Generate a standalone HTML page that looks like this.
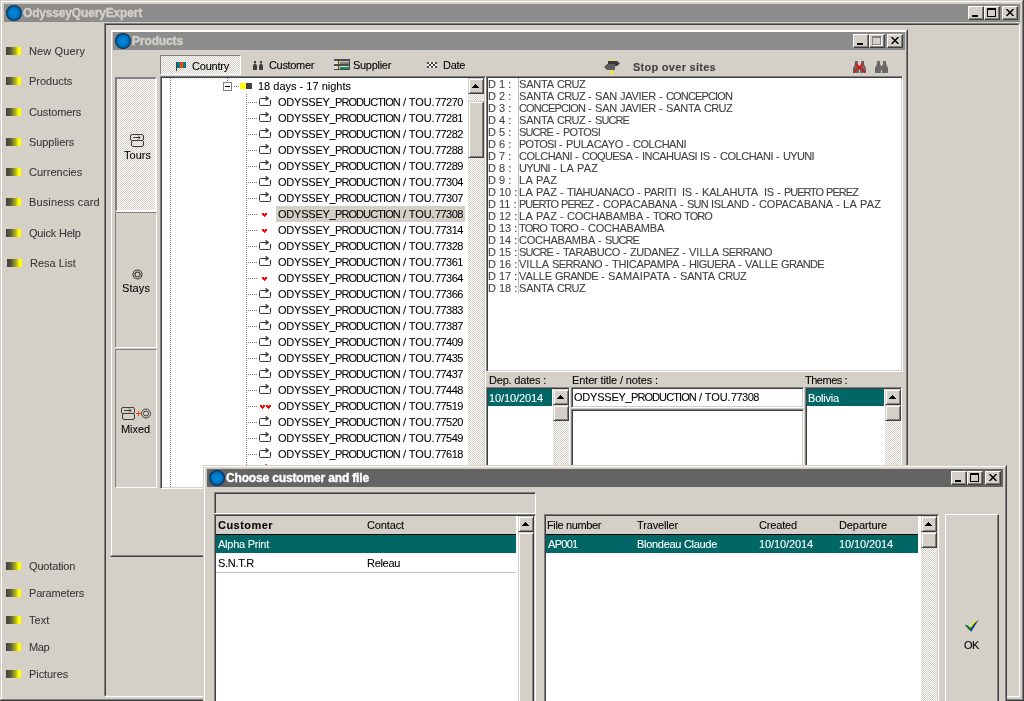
<!DOCTYPE html>
<html><head><meta charset="utf-8"><title>OdysseyQueryExpert</title>
<style>
*{margin:0;padding:0}
html,body{width:1024px;height:701px;overflow:hidden;background:#d4d0c8}
body{position:relative;font-family:"Liberation Sans",sans-serif;font-size:11px}
div,span.t,i,svg.a{position:absolute;display:block}
div{box-sizing:border-box}
.t{white-space:nowrap;will-change:transform;-webkit-text-stroke:0.08px}
.led{background:linear-gradient(90deg,#404040 0,#5a5a3c 30%,#b4b41e 65%,#ffff00 82%,#ffff00 100%)}
.orb{border-radius:50%;background:radial-gradient(circle closest-side at 50% 50%,#0088d8 0,#0080d0 40%,#0074c0 65%,#005c9c 80%,#003c70 90%,#002850 100%)}
.btn{background:#d4d0c8;border:1px solid;border-color:#fff #404040 #404040 #fff;box-shadow:inset -1px -1px 0 #808080}
.sbtn{background:#d4d0c8;border:1px solid;border-color:#d4d0c8 #404040 #404040 #d4d0c8;box-shadow:inset 1px 1px 0 #fff,inset -1px -1px 0 #808080}
.sunk1{border:1px solid;border-color:#808080 #fff #fff #808080}
.rais1{border:1px solid;border-color:#fff #808080 #808080 #fff}
.sunk2{border:1px solid;border-color:#808080 #fff #fff #808080;box-shadow:inset 1px 1px 0 #404040,inset -1px -1px 0 #d4d0c8}
.dith{background-image:conic-gradient(#fff 25%,#d4d0c8 0 50%,#fff 0 75%,#d4d0c8 0);background-size:2px 2px}
.vdot{background-image:linear-gradient(#808080 50%,transparent 0);background-size:1px 2px}
.hdot{background-image:linear-gradient(90deg,#808080 50%,transparent 0);background-size:2px 1px}
</style></head>
<body>
<div style="left:0px;top:0px;width:1024px;height:701px;background:#d4d0c8;"></div>
<div style="left:1px;top:1px;width:1022px;height:700px;border-left:1px solid #fff;border-top:1px solid #fff;box-sizing:border-box;"></div>
<div style="left:1022px;top:1px;width:1px;height:700px;background:#808080;"></div>
<div style="left:1023px;top:0px;width:1px;height:701px;background:#404040;"></div>
<div style="left:4px;top:4px;width:1016px;height:18px;background:#8c8c8c;"></div>
<div class="orb" style="left:6px;top:5px;width:16px;height:16px;"></div>
<span class="t" style="left:23px;top:7px;font-size:12px;line-height:13px;font-weight:bold;color:#d4d0c8;letter-spacing:-0.170px;-webkit-text-stroke:0.35px #d4d0c8;">OdysseyQueryExpert</span>
<div class="btn" style="left:968px;top:6px;width:16px;height:14px;"><i style="left:3px;top:8px;width:6px;height:2px;background:#000"></i></div>
<div class="btn" style="left:984px;top:6px;width:16px;height:14px;"><i style="left:2px;top:1px;width:9px;height:9px;border:1px solid #000;border-top:2px solid #000;box-sizing:border-box"></i></div>
<div class="btn" style="left:1002px;top:6px;width:16px;height:14px;"><svg style="position:absolute;left:3px;top:2px" width="8" height="7" viewBox="0 0 8 7"><path d="M0.5 0L7.5 7M7.5 0L0.5 7" stroke="#000" stroke-width="1.45" fill="none"/></svg></div>
<div style="left:104px;top:23px;width:916px;height:674px;border:1px solid;border-color:#808080 #fff #fff #808080;box-sizing:border-box;"></div>
<div style="left:105px;top:24px;width:914px;height:672px;border:1px solid;border-color:#404040 #d4d0c8 #d4d0c8 #404040;box-sizing:border-box;"></div>
<div style="left:1px;top:699px;width:1022px;height:1px;background:#808080;"></div>
<div style="left:0px;top:700px;width:1024px;height:1px;background:#404040;"></div>
<div class="led" style="left:6px;top:47px;width:15px;height:8px;"></div>
<span class="t" style="left:29px;top:45px;font-size:11px;line-height:12px;color:#383838;letter-spacing:0.132px;">New Query</span>
<div class="led" style="left:6px;top:77px;width:15px;height:8px;"></div>
<span class="t" style="left:29px;top:75px;font-size:11px;line-height:12px;color:#383838;letter-spacing:-0.026px;">Products</span>
<div class="led" style="left:6px;top:108px;width:15px;height:8px;"></div>
<span class="t" style="left:29px;top:106px;font-size:11px;line-height:12px;color:#383838;letter-spacing:-0.109px;">Customers</span>
<div class="led" style="left:6px;top:138px;width:15px;height:8px;"></div>
<span class="t" style="left:29px;top:136px;font-size:11px;line-height:12px;color:#383838;letter-spacing:-0.073px;">Suppliers</span>
<div class="led" style="left:6px;top:168px;width:15px;height:8px;"></div>
<span class="t" style="left:29px;top:166px;font-size:11px;line-height:12px;color:#383838;letter-spacing:0.002px;">Currencies</span>
<div class="led" style="left:6px;top:198px;width:15px;height:8px;"></div>
<span class="t" style="left:29px;top:196px;font-size:11px;line-height:12px;color:#383838;letter-spacing:0.124px;">Business card</span>
<div class="led" style="left:6px;top:229px;width:15px;height:8px;"></div>
<span class="t" style="left:29px;top:227px;font-size:11px;line-height:12px;color:#383838;letter-spacing:-0.210px;">Quick Help</span>
<div class="led" style="left:7px;top:259px;width:15px;height:8px;"></div>
<span class="t" style="left:30px;top:257px;font-size:11px;line-height:12px;color:#383838;letter-spacing:-0.017px;">Resa List</span>
<div class="led" style="left:6px;top:562px;width:15px;height:8px;"></div>
<span class="t" style="left:29px;top:560px;font-size:11px;line-height:12px;color:#383838;letter-spacing:-0.166px;">Quotation</span>
<div class="led" style="left:6px;top:589px;width:15px;height:8px;"></div>
<span class="t" style="left:29px;top:587px;font-size:11px;line-height:12px;color:#383838;letter-spacing:-0.165px;">Parameters</span>
<div class="led" style="left:6px;top:616px;width:15px;height:8px;"></div>
<span class="t" style="left:29px;top:614px;font-size:11px;line-height:12px;color:#383838;letter-spacing:0.007px;">Text</span>
<div class="led" style="left:6px;top:643px;width:15px;height:8px;"></div>
<span class="t" style="left:29px;top:641px;font-size:11px;line-height:12px;color:#383838;letter-spacing:-0.399px;">Map</span>
<div class="led" style="left:6px;top:670px;width:15px;height:8px;"></div>
<span class="t" style="left:29px;top:668px;font-size:11px;line-height:12px;color:#383838;letter-spacing:-0.067px;">Pictures</span>
<div style="left:110px;top:29px;width:798px;height:528px;background:#d4d0c8;border:1px solid;border-color:#d4d0c8 #404040 #404040 #d4d0c8;box-sizing:border-box;"></div>
<div style="left:111px;top:30px;width:796px;height:526px;border:1px solid;border-color:#fff #808080 #808080 #fff;box-sizing:border-box;"></div>
<div style="left:113px;top:32px;width:792px;height:18px;background:#8c8c8c;"></div>
<div style="left:112px;top:31px;width:794px;height:1px;background:#fff;"></div>
<div class="orb" style="left:115px;top:33px;width:16px;height:16px;"></div>
<span class="t" style="left:132px;top:35px;font-size:12px;line-height:13px;font-weight:bold;color:#d4d0c8;letter-spacing:-0.126px;-webkit-text-stroke:0.35px #d4d0c8;">Products</span>
<div class="btn" style="left:853px;top:34px;width:16px;height:14px;"><i style="left:3px;top:8px;width:6px;height:2px;background:#000"></i></div>
<div class="btn" style="left:869px;top:34px;width:16px;height:14px;"><i style="left:2px;top:1px;width:9px;height:9px;border:1px solid #808080;border-top:2px solid #808080;box-shadow:1px 1px 0 #fff;box-sizing:border-box"></i></div>
<div class="btn" style="left:887px;top:34px;width:16px;height:14px;"><svg style="position:absolute;left:3px;top:2px" width="8" height="7" viewBox="0 0 8 7"><path d="M0.5 0L7.5 7M7.5 0L0.5 7" stroke="#000" stroke-width="1.45" fill="none"/></svg></div>
<div class="sunk1 dith" style="left:160px;top:55px;width:81px;height:20px;"></div>
<div style="left:176px;top:62px;width:1px;height:9px;background:#404040;"></div>
<div style="left:177px;top:62px;width:3px;height:6px;background:#008080;"></div>
<div style="left:180px;top:62px;width:3px;height:6px;background:#ff4500;"></div>
<div style="left:183px;top:62px;width:3px;height:6px;background:#008080;"></div>
<span class="t" style="left:192px;top:60px;font-size:11px;line-height:12px;letter-spacing:-0.216px;">Country</span>
<svg class="a" style="left:253px;top:61px" width="10" height="9" viewBox="0 0 10 9"><g fill="#404040"><rect x="1" y="0" width="2" height="2.4"/><path d="M1 3H3L4 4.5V9H0V4.5Z"/><rect x="7" y="0" width="2" height="2.4"/><path d="M7 3H9L10 4.5V9H6V4.5Z"/></g></svg>
<span class="t" style="left:269px;top:59px;font-size:11px;line-height:12px;letter-spacing:-0.335px;">Customer</span>
<svg class="a" style="left:334px;top:59px" width="16" height="11" viewBox="0 0 16 11" shape-rendering="crispEdges"><rect width="16" height="11" fill="#4c4c4c"/><rect x="0" y="2" width="4" height="3" fill="#dcdce4"/><rect x="5" y="2" width="1" height="3" fill="#e8e000"/><rect x="6" y="2" width="9" height="1" fill="#c8c8c8"/><rect x="6" y="3" width="9" height="2" fill="#808080"/><rect x="0" y="7" width="4" height="3" fill="#dcdce4"/><rect x="5" y="7" width="1" height="3" fill="#e8e000"/><rect x="6" y="7" width="9" height="1" fill="#c8e0d0"/><rect x="6" y="8" width="9" height="2" fill="#109060"/></svg>
<span class="t" style="left:353px;top:59px;font-size:11px;line-height:12px;letter-spacing:-0.295px;">Supplier</span>
<svg class="a" style="left:427px;top:62px" width="10" height="6" viewBox="0 0 10 6"><rect width="10" height="6" fill="#f4f4f4"/><g fill="#484848"><rect x="0" y="0" width="2" height="2"/><rect x="4" y="0" width="2" height="2"/><rect x="8" y="0" width="2" height="2"/><rect x="2" y="2" width="2" height="2"/><rect x="6" y="2" width="2" height="2"/><rect x="0" y="4" width="2" height="2"/><rect x="4" y="4" width="2" height="2"/><rect x="8" y="4" width="2" height="2"/></g></svg>
<span class="t" style="left:443px;top:59px;font-size:11px;line-height:12px;letter-spacing:-0.309px;">Date</span>
<svg class="a" style="left:604px;top:59px" width="17" height="16" viewBox="0 0 17 16"><rect x="7" y="0" width="2" height="16" fill="#ffee00"/><path d="M4 2H13L16 4.5L13 7H4Z" fill="#383838"/><path d="M11 5H3L0 8L3 11H11Z" fill="#5c5c5c"/></svg>
<span class="t" style="left:633px;top:61px;font-size:11px;line-height:12px;font-weight:bold;color:#404040;letter-spacing:0.276px;">Stop over sites</span>
<svg class="a" style="left:853px;top:61px" width="13" height="12" viewBox="0 0 13 12"><g fill="#686868"><rect x="2" y="0" width="3" height="4"/><path d="M2 3H5L6 5V12H0V7Z"/><rect x="8" y="0" width="3" height="4"/><path d="M8 3H11L13 7V12H7V5Z"/><rect x="5" y="5" width="3" height="4"/></g><path d="M2 2.5L12.5 11.5M10.5 2.5L0 11.5" stroke="#ff0000" stroke-width="1.3"/></svg>
<svg class="a" style="left:875px;top:61px" width="13" height="12" viewBox="0 0 13 12"><g fill="#686868"><rect x="2" y="0" width="3" height="4"/><path d="M2 3H5L6 5V12H0V7Z"/><rect x="8" y="0" width="3" height="4"/><path d="M8 3H11L13 7V12H7V5Z"/><rect x="5" y="5" width="3" height="4"/></g></svg>
<div class="sunk1 dith" style="left:115px;top:77px;width:42px;height:135px;border-width:2px;"></div>
<div class="sunk1" style="left:115px;top:212px;width:42px;height:136px;"></div>
<div class="sunk1" style="left:115px;top:349px;width:42px;height:139px;"></div>
<svg class="a" style="left:130px;top:134px" width="15" height="14" viewBox="0 0 15 14"><g fill="none" stroke="#404040" stroke-width="1"><rect x="0.5" y="0.5" width="13" height="6" rx="1.5"/><rect x="1.5" y="6.5" width="12" height="6" rx="1.5"/><path d="M3 3.5H10M8 1.5L10 3.5L8 5.5" /></g></svg>
<span class="t" style="left:124px;top:149px;font-size:11px;line-height:12px;color:#000;letter-spacing:0.021px;">Tours</span>
<svg class="a" style="left:132px;top:269px" width="11" height="11" viewBox="0 0 11 11"><circle cx="5.5" cy="5.5" r="4.5" fill="none" stroke="#383838" stroke-width="1.1"/><circle cx="5.5" cy="5.5" r="2.5" fill="none" stroke="#383838" stroke-width="1.1"/></svg>
<span class="t" style="left:122px;top:282px;font-size:11px;line-height:12px;color:#000;letter-spacing:0.098px;">Stays</span>
<svg class="a" style="left:121px;top:407px" width="15" height="14" viewBox="0 0 15 14"><g fill="none" stroke="#404040" stroke-width="1"><rect x="0.5" y="0.5" width="13" height="6" rx="1.5"/><rect x="1.5" y="6.5" width="12" height="6" rx="1.5"/><path d="M3 3.5H10M8 1.5L10 3.5L8 5.5" /></g></svg>
<svg class="a" style="left:136px;top:408px" width="16" height="11" viewBox="0 0 16 11"><path d="M0 5.5H5M2.5 3V8" stroke="#ff4500" stroke-width="1"/><circle cx="10" cy="5.5" r="4.5" fill="none" stroke="#404040"/><circle cx="10" cy="5.5" r="2.5" fill="none" stroke="#404040"/></svg>
<span class="t" style="left:121px;top:423px;font-size:11px;line-height:12px;color:#000;letter-spacing:-0.068px;">Mixed</span>
<div class="sunk2" style="left:160px;top:76px;width:326px;height:413px;background:#fff;"></div>
<div class="vdot" style="left:170px;top:78px;width:1px;height:410px;"></div>
<div class="vdot" style="left:227px;top:78px;width:1px;height:4px;"></div>
<div class="vdot" style="left:246px;top:94px;width:1px;height:394px;"></div>
<div style="left:223px;top:82px;width:9px;height:9px;border:1px solid #808080;background:#fff;box-sizing:border-box;"><i style="left:1px;top:3px;width:5px;height:1px;background:#000"></i></div>
<div class="hdot" style="left:234px;top:86px;width:5px;height:1px;"></div>
<div style="left:240px;top:83px;width:6px;height:6px;background:#ffff00;"></div>
<div style="left:246px;top:83px;width:6px;height:6px;background:#404040;"></div>
<span class="t" style="left:258px;top:80px;font-size:11px;line-height:12px;color:#000;letter-spacing:0.003px;">18 days - 17 nights</span>
<div class="hdot" style="left:248px;top:102px;width:10px;height:1px;"></div>
<svg class="a" style="left:259px;top:96px" width="12" height="10" viewBox="0 0 12 10"><g fill="none" stroke="#383838"><path d="M8.5 2.5H1.5Q0.5 2.5 0.5 3.5V8.5Q0.5 9.5 1.5 9.5H10.5Q11.5 9.5 11.5 8.5V4"/><path d="M6.5 0.4L9.2 2.5L6.5 4.6" stroke-width="1.3"/></g></svg>
<span class="t" style="left:278px;top:96px;font-size:11px;line-height:12px;color:#000;letter-spacing:-0.226px;">ODYSSEY_</span>
<span class="t" style="left:335px;top:96px;font-size:11px;line-height:12px;color:#000;letter-spacing:-0.914px;">PRODUCTION</span>
<span class="t" style="left:402.6px;top:96px;font-size:11px;line-height:12px;color:#000;letter-spacing:-0.065px;">/ TOU.</span>
<span class="t" style="left:434.5px;top:96px;font-size:11px;line-height:12px;color:#000;letter-spacing:-0.557px;">77270</span>
<div class="hdot" style="left:248px;top:118px;width:10px;height:1px;"></div>
<svg class="a" style="left:259px;top:112px" width="12" height="10" viewBox="0 0 12 10"><g fill="none" stroke="#383838"><path d="M8.5 2.5H1.5Q0.5 2.5 0.5 3.5V8.5Q0.5 9.5 1.5 9.5H10.5Q11.5 9.5 11.5 8.5V4"/><path d="M6.5 0.4L9.2 2.5L6.5 4.6" stroke-width="1.3"/></g></svg>
<span class="t" style="left:278px;top:112px;font-size:11px;line-height:12px;color:#000;letter-spacing:-0.226px;">ODYSSEY_</span>
<span class="t" style="left:335px;top:112px;font-size:11px;line-height:12px;color:#000;letter-spacing:-0.914px;">PRODUCTION</span>
<span class="t" style="left:402.6px;top:112px;font-size:11px;line-height:12px;color:#000;letter-spacing:-0.065px;">/ TOU.</span>
<span class="t" style="left:434.5px;top:112px;font-size:11px;line-height:12px;color:#000;letter-spacing:-0.557px;">77281</span>
<div class="hdot" style="left:248px;top:134px;width:10px;height:1px;"></div>
<svg class="a" style="left:259px;top:128px" width="12" height="10" viewBox="0 0 12 10"><g fill="none" stroke="#383838"><path d="M8.5 2.5H1.5Q0.5 2.5 0.5 3.5V8.5Q0.5 9.5 1.5 9.5H10.5Q11.5 9.5 11.5 8.5V4"/><path d="M6.5 0.4L9.2 2.5L6.5 4.6" stroke-width="1.3"/></g></svg>
<span class="t" style="left:278px;top:128px;font-size:11px;line-height:12px;color:#000;letter-spacing:-0.226px;">ODYSSEY_</span>
<span class="t" style="left:335px;top:128px;font-size:11px;line-height:12px;color:#000;letter-spacing:-0.914px;">PRODUCTION</span>
<span class="t" style="left:402.6px;top:128px;font-size:11px;line-height:12px;color:#000;letter-spacing:-0.065px;">/ TOU.</span>
<span class="t" style="left:434.5px;top:128px;font-size:11px;line-height:12px;color:#000;letter-spacing:-0.557px;">77282</span>
<div class="hdot" style="left:248px;top:150px;width:10px;height:1px;"></div>
<svg class="a" style="left:259px;top:144px" width="12" height="10" viewBox="0 0 12 10"><g fill="none" stroke="#383838"><path d="M8.5 2.5H1.5Q0.5 2.5 0.5 3.5V8.5Q0.5 9.5 1.5 9.5H10.5Q11.5 9.5 11.5 8.5V4"/><path d="M6.5 0.4L9.2 2.5L6.5 4.6" stroke-width="1.3"/></g></svg>
<span class="t" style="left:278px;top:144px;font-size:11px;line-height:12px;color:#000;letter-spacing:-0.226px;">ODYSSEY_</span>
<span class="t" style="left:335px;top:144px;font-size:11px;line-height:12px;color:#000;letter-spacing:-0.914px;">PRODUCTION</span>
<span class="t" style="left:402.6px;top:144px;font-size:11px;line-height:12px;color:#000;letter-spacing:-0.065px;">/ TOU.</span>
<span class="t" style="left:434.5px;top:144px;font-size:11px;line-height:12px;color:#000;letter-spacing:-0.557px;">77288</span>
<div class="hdot" style="left:248px;top:166px;width:10px;height:1px;"></div>
<svg class="a" style="left:259px;top:160px" width="12" height="10" viewBox="0 0 12 10"><g fill="none" stroke="#383838"><path d="M8.5 2.5H1.5Q0.5 2.5 0.5 3.5V8.5Q0.5 9.5 1.5 9.5H10.5Q11.5 9.5 11.5 8.5V4"/><path d="M6.5 0.4L9.2 2.5L6.5 4.6" stroke-width="1.3"/></g></svg>
<span class="t" style="left:278px;top:160px;font-size:11px;line-height:12px;color:#000;letter-spacing:-0.226px;">ODYSSEY_</span>
<span class="t" style="left:335px;top:160px;font-size:11px;line-height:12px;color:#000;letter-spacing:-0.914px;">PRODUCTION</span>
<span class="t" style="left:402.6px;top:160px;font-size:11px;line-height:12px;color:#000;letter-spacing:-0.065px;">/ TOU.</span>
<span class="t" style="left:434.5px;top:160px;font-size:11px;line-height:12px;color:#000;letter-spacing:-0.557px;">77289</span>
<div class="hdot" style="left:248px;top:182px;width:10px;height:1px;"></div>
<svg class="a" style="left:259px;top:176px" width="12" height="10" viewBox="0 0 12 10"><g fill="none" stroke="#383838"><path d="M8.5 2.5H1.5Q0.5 2.5 0.5 3.5V8.5Q0.5 9.5 1.5 9.5H10.5Q11.5 9.5 11.5 8.5V4"/><path d="M6.5 0.4L9.2 2.5L6.5 4.6" stroke-width="1.3"/></g></svg>
<span class="t" style="left:278px;top:176px;font-size:11px;line-height:12px;color:#000;letter-spacing:-0.226px;">ODYSSEY_</span>
<span class="t" style="left:335px;top:176px;font-size:11px;line-height:12px;color:#000;letter-spacing:-0.914px;">PRODUCTION</span>
<span class="t" style="left:402.6px;top:176px;font-size:11px;line-height:12px;color:#000;letter-spacing:-0.065px;">/ TOU.</span>
<span class="t" style="left:434.5px;top:176px;font-size:11px;line-height:12px;color:#000;letter-spacing:-0.557px;">77304</span>
<div class="hdot" style="left:248px;top:198px;width:10px;height:1px;"></div>
<svg class="a" style="left:259px;top:192px" width="12" height="10" viewBox="0 0 12 10"><g fill="none" stroke="#383838"><path d="M8.5 2.5H1.5Q0.5 2.5 0.5 3.5V8.5Q0.5 9.5 1.5 9.5H10.5Q11.5 9.5 11.5 8.5V4"/><path d="M6.5 0.4L9.2 2.5L6.5 4.6" stroke-width="1.3"/></g></svg>
<span class="t" style="left:278px;top:192px;font-size:11px;line-height:12px;color:#000;letter-spacing:-0.226px;">ODYSSEY_</span>
<span class="t" style="left:335px;top:192px;font-size:11px;line-height:12px;color:#000;letter-spacing:-0.914px;">PRODUCTION</span>
<span class="t" style="left:402.6px;top:192px;font-size:11px;line-height:12px;color:#000;letter-spacing:-0.065px;">/ TOU.</span>
<span class="t" style="left:434.5px;top:192px;font-size:11px;line-height:12px;color:#000;letter-spacing:-0.557px;">77307</span>
<div class="hdot" style="left:248px;top:214px;width:10px;height:1px;"></div>
<svg class="a" style="left:262px;top:213px" width="5" height="4" viewBox="0 0 5 4" shape-rendering="crispEdges"><path d="M0 0H2V1H3V0H5V2H4V3H3V4H2V3H1V2H0Z" fill="#ff0000"/></svg>
<div style="left:276px;top:206px;width:189px;height:16px;background:#d4d0c8;"></div>
<span class="t" style="left:278px;top:208px;font-size:11px;line-height:12px;color:#000;letter-spacing:-0.226px;">ODYSSEY_</span>
<span class="t" style="left:335px;top:208px;font-size:11px;line-height:12px;color:#000;letter-spacing:-0.914px;">PRODUCTION</span>
<span class="t" style="left:402.6px;top:208px;font-size:11px;line-height:12px;color:#000;letter-spacing:-0.065px;">/ TOU.</span>
<span class="t" style="left:434.5px;top:208px;font-size:11px;line-height:12px;color:#000;letter-spacing:-0.557px;">77308</span>
<div class="hdot" style="left:248px;top:230px;width:10px;height:1px;"></div>
<svg class="a" style="left:262px;top:229px" width="5" height="4" viewBox="0 0 5 4" shape-rendering="crispEdges"><path d="M0 0H2V1H3V0H5V2H4V3H3V4H2V3H1V2H0Z" fill="#ff0000"/></svg>
<span class="t" style="left:278px;top:224px;font-size:11px;line-height:12px;color:#000;letter-spacing:-0.226px;">ODYSSEY_</span>
<span class="t" style="left:335px;top:224px;font-size:11px;line-height:12px;color:#000;letter-spacing:-0.914px;">PRODUCTION</span>
<span class="t" style="left:402.6px;top:224px;font-size:11px;line-height:12px;color:#000;letter-spacing:-0.065px;">/ TOU.</span>
<span class="t" style="left:434.5px;top:224px;font-size:11px;line-height:12px;color:#000;letter-spacing:-0.557px;">77314</span>
<div class="hdot" style="left:248px;top:246px;width:10px;height:1px;"></div>
<svg class="a" style="left:259px;top:240px" width="12" height="10" viewBox="0 0 12 10"><g fill="none" stroke="#383838"><path d="M8.5 2.5H1.5Q0.5 2.5 0.5 3.5V8.5Q0.5 9.5 1.5 9.5H10.5Q11.5 9.5 11.5 8.5V4"/><path d="M6.5 0.4L9.2 2.5L6.5 4.6" stroke-width="1.3"/></g></svg>
<span class="t" style="left:278px;top:240px;font-size:11px;line-height:12px;color:#000;letter-spacing:-0.226px;">ODYSSEY_</span>
<span class="t" style="left:335px;top:240px;font-size:11px;line-height:12px;color:#000;letter-spacing:-0.914px;">PRODUCTION</span>
<span class="t" style="left:402.6px;top:240px;font-size:11px;line-height:12px;color:#000;letter-spacing:-0.065px;">/ TOU.</span>
<span class="t" style="left:434.5px;top:240px;font-size:11px;line-height:12px;color:#000;letter-spacing:-0.557px;">77328</span>
<div class="hdot" style="left:248px;top:262px;width:10px;height:1px;"></div>
<svg class="a" style="left:259px;top:256px" width="12" height="10" viewBox="0 0 12 10"><g fill="none" stroke="#383838"><path d="M8.5 2.5H1.5Q0.5 2.5 0.5 3.5V8.5Q0.5 9.5 1.5 9.5H10.5Q11.5 9.5 11.5 8.5V4"/><path d="M6.5 0.4L9.2 2.5L6.5 4.6" stroke-width="1.3"/></g></svg>
<span class="t" style="left:278px;top:256px;font-size:11px;line-height:12px;color:#000;letter-spacing:-0.226px;">ODYSSEY_</span>
<span class="t" style="left:335px;top:256px;font-size:11px;line-height:12px;color:#000;letter-spacing:-0.914px;">PRODUCTION</span>
<span class="t" style="left:402.6px;top:256px;font-size:11px;line-height:12px;color:#000;letter-spacing:-0.065px;">/ TOU.</span>
<span class="t" style="left:434.5px;top:256px;font-size:11px;line-height:12px;color:#000;letter-spacing:-0.557px;">77361</span>
<div class="hdot" style="left:248px;top:278px;width:10px;height:1px;"></div>
<svg class="a" style="left:262px;top:277px" width="5" height="4" viewBox="0 0 5 4" shape-rendering="crispEdges"><path d="M0 0H2V1H3V0H5V2H4V3H3V4H2V3H1V2H0Z" fill="#ff0000"/></svg>
<span class="t" style="left:278px;top:272px;font-size:11px;line-height:12px;color:#000;letter-spacing:-0.226px;">ODYSSEY_</span>
<span class="t" style="left:335px;top:272px;font-size:11px;line-height:12px;color:#000;letter-spacing:-0.914px;">PRODUCTION</span>
<span class="t" style="left:402.6px;top:272px;font-size:11px;line-height:12px;color:#000;letter-spacing:-0.065px;">/ TOU.</span>
<span class="t" style="left:434.5px;top:272px;font-size:11px;line-height:12px;color:#000;letter-spacing:-0.557px;">77364</span>
<div class="hdot" style="left:248px;top:294px;width:10px;height:1px;"></div>
<svg class="a" style="left:259px;top:288px" width="12" height="10" viewBox="0 0 12 10"><g fill="none" stroke="#383838"><path d="M8.5 2.5H1.5Q0.5 2.5 0.5 3.5V8.5Q0.5 9.5 1.5 9.5H10.5Q11.5 9.5 11.5 8.5V4"/><path d="M6.5 0.4L9.2 2.5L6.5 4.6" stroke-width="1.3"/></g></svg>
<span class="t" style="left:278px;top:288px;font-size:11px;line-height:12px;color:#000;letter-spacing:-0.226px;">ODYSSEY_</span>
<span class="t" style="left:335px;top:288px;font-size:11px;line-height:12px;color:#000;letter-spacing:-0.914px;">PRODUCTION</span>
<span class="t" style="left:402.6px;top:288px;font-size:11px;line-height:12px;color:#000;letter-spacing:-0.065px;">/ TOU.</span>
<span class="t" style="left:434.5px;top:288px;font-size:11px;line-height:12px;color:#000;letter-spacing:-0.557px;">77366</span>
<div class="hdot" style="left:248px;top:310px;width:10px;height:1px;"></div>
<svg class="a" style="left:259px;top:304px" width="12" height="10" viewBox="0 0 12 10"><g fill="none" stroke="#383838"><path d="M8.5 2.5H1.5Q0.5 2.5 0.5 3.5V8.5Q0.5 9.5 1.5 9.5H10.5Q11.5 9.5 11.5 8.5V4"/><path d="M6.5 0.4L9.2 2.5L6.5 4.6" stroke-width="1.3"/></g></svg>
<span class="t" style="left:278px;top:304px;font-size:11px;line-height:12px;color:#000;letter-spacing:-0.226px;">ODYSSEY_</span>
<span class="t" style="left:335px;top:304px;font-size:11px;line-height:12px;color:#000;letter-spacing:-0.914px;">PRODUCTION</span>
<span class="t" style="left:402.6px;top:304px;font-size:11px;line-height:12px;color:#000;letter-spacing:-0.065px;">/ TOU.</span>
<span class="t" style="left:434.5px;top:304px;font-size:11px;line-height:12px;color:#000;letter-spacing:-0.557px;">77383</span>
<div class="hdot" style="left:248px;top:326px;width:10px;height:1px;"></div>
<svg class="a" style="left:259px;top:320px" width="12" height="10" viewBox="0 0 12 10"><g fill="none" stroke="#383838"><path d="M8.5 2.5H1.5Q0.5 2.5 0.5 3.5V8.5Q0.5 9.5 1.5 9.5H10.5Q11.5 9.5 11.5 8.5V4"/><path d="M6.5 0.4L9.2 2.5L6.5 4.6" stroke-width="1.3"/></g></svg>
<span class="t" style="left:278px;top:320px;font-size:11px;line-height:12px;color:#000;letter-spacing:-0.226px;">ODYSSEY_</span>
<span class="t" style="left:335px;top:320px;font-size:11px;line-height:12px;color:#000;letter-spacing:-0.914px;">PRODUCTION</span>
<span class="t" style="left:402.6px;top:320px;font-size:11px;line-height:12px;color:#000;letter-spacing:-0.065px;">/ TOU.</span>
<span class="t" style="left:434.5px;top:320px;font-size:11px;line-height:12px;color:#000;letter-spacing:-0.557px;">77387</span>
<div class="hdot" style="left:248px;top:342px;width:10px;height:1px;"></div>
<svg class="a" style="left:259px;top:336px" width="12" height="10" viewBox="0 0 12 10"><g fill="none" stroke="#383838"><path d="M8.5 2.5H1.5Q0.5 2.5 0.5 3.5V8.5Q0.5 9.5 1.5 9.5H10.5Q11.5 9.5 11.5 8.5V4"/><path d="M6.5 0.4L9.2 2.5L6.5 4.6" stroke-width="1.3"/></g></svg>
<span class="t" style="left:278px;top:336px;font-size:11px;line-height:12px;color:#000;letter-spacing:-0.226px;">ODYSSEY_</span>
<span class="t" style="left:335px;top:336px;font-size:11px;line-height:12px;color:#000;letter-spacing:-0.914px;">PRODUCTION</span>
<span class="t" style="left:402.6px;top:336px;font-size:11px;line-height:12px;color:#000;letter-spacing:-0.065px;">/ TOU.</span>
<span class="t" style="left:434.5px;top:336px;font-size:11px;line-height:12px;color:#000;letter-spacing:-0.557px;">77409</span>
<div class="hdot" style="left:248px;top:358px;width:10px;height:1px;"></div>
<svg class="a" style="left:259px;top:352px" width="12" height="10" viewBox="0 0 12 10"><g fill="none" stroke="#383838"><path d="M8.5 2.5H1.5Q0.5 2.5 0.5 3.5V8.5Q0.5 9.5 1.5 9.5H10.5Q11.5 9.5 11.5 8.5V4"/><path d="M6.5 0.4L9.2 2.5L6.5 4.6" stroke-width="1.3"/></g></svg>
<span class="t" style="left:278px;top:352px;font-size:11px;line-height:12px;color:#000;letter-spacing:-0.226px;">ODYSSEY_</span>
<span class="t" style="left:335px;top:352px;font-size:11px;line-height:12px;color:#000;letter-spacing:-0.914px;">PRODUCTION</span>
<span class="t" style="left:402.6px;top:352px;font-size:11px;line-height:12px;color:#000;letter-spacing:-0.065px;">/ TOU.</span>
<span class="t" style="left:434.5px;top:352px;font-size:11px;line-height:12px;color:#000;letter-spacing:-0.557px;">77435</span>
<div class="hdot" style="left:248px;top:374px;width:10px;height:1px;"></div>
<svg class="a" style="left:259px;top:368px" width="12" height="10" viewBox="0 0 12 10"><g fill="none" stroke="#383838"><path d="M8.5 2.5H1.5Q0.5 2.5 0.5 3.5V8.5Q0.5 9.5 1.5 9.5H10.5Q11.5 9.5 11.5 8.5V4"/><path d="M6.5 0.4L9.2 2.5L6.5 4.6" stroke-width="1.3"/></g></svg>
<span class="t" style="left:278px;top:368px;font-size:11px;line-height:12px;color:#000;letter-spacing:-0.226px;">ODYSSEY_</span>
<span class="t" style="left:335px;top:368px;font-size:11px;line-height:12px;color:#000;letter-spacing:-0.914px;">PRODUCTION</span>
<span class="t" style="left:402.6px;top:368px;font-size:11px;line-height:12px;color:#000;letter-spacing:-0.065px;">/ TOU.</span>
<span class="t" style="left:434.5px;top:368px;font-size:11px;line-height:12px;color:#000;letter-spacing:-0.557px;">77437</span>
<div class="hdot" style="left:248px;top:390px;width:10px;height:1px;"></div>
<svg class="a" style="left:259px;top:384px" width="12" height="10" viewBox="0 0 12 10"><g fill="none" stroke="#383838"><path d="M8.5 2.5H1.5Q0.5 2.5 0.5 3.5V8.5Q0.5 9.5 1.5 9.5H10.5Q11.5 9.5 11.5 8.5V4"/><path d="M6.5 0.4L9.2 2.5L6.5 4.6" stroke-width="1.3"/></g></svg>
<span class="t" style="left:278px;top:384px;font-size:11px;line-height:12px;color:#000;letter-spacing:-0.226px;">ODYSSEY_</span>
<span class="t" style="left:335px;top:384px;font-size:11px;line-height:12px;color:#000;letter-spacing:-0.914px;">PRODUCTION</span>
<span class="t" style="left:402.6px;top:384px;font-size:11px;line-height:12px;color:#000;letter-spacing:-0.065px;">/ TOU.</span>
<span class="t" style="left:434.5px;top:384px;font-size:11px;line-height:12px;color:#000;letter-spacing:-0.557px;">77448</span>
<div class="hdot" style="left:248px;top:406px;width:10px;height:1px;"></div>
<svg class="a" style="left:260px;top:405px" width="5" height="4" viewBox="0 0 5 4" shape-rendering="crispEdges"><path d="M0 0H2V1H3V0H5V2H4V3H3V4H2V3H1V2H0Z" fill="#ff0000"/></svg>
<svg class="a" style="left:266px;top:405px" width="5" height="4" viewBox="0 0 5 4" shape-rendering="crispEdges"><path d="M0 0H2V1H3V0H5V2H4V3H3V4H2V3H1V2H0Z" fill="#ff0000"/></svg>
<span class="t" style="left:278px;top:400px;font-size:11px;line-height:12px;color:#000;letter-spacing:-0.226px;">ODYSSEY_</span>
<span class="t" style="left:335px;top:400px;font-size:11px;line-height:12px;color:#000;letter-spacing:-0.914px;">PRODUCTION</span>
<span class="t" style="left:402.6px;top:400px;font-size:11px;line-height:12px;color:#000;letter-spacing:-0.065px;">/ TOU.</span>
<span class="t" style="left:434.5px;top:400px;font-size:11px;line-height:12px;color:#000;letter-spacing:-0.557px;">77519</span>
<div class="hdot" style="left:248px;top:422px;width:10px;height:1px;"></div>
<svg class="a" style="left:259px;top:416px" width="12" height="10" viewBox="0 0 12 10"><g fill="none" stroke="#383838"><path d="M8.5 2.5H1.5Q0.5 2.5 0.5 3.5V8.5Q0.5 9.5 1.5 9.5H10.5Q11.5 9.5 11.5 8.5V4"/><path d="M6.5 0.4L9.2 2.5L6.5 4.6" stroke-width="1.3"/></g></svg>
<span class="t" style="left:278px;top:416px;font-size:11px;line-height:12px;color:#000;letter-spacing:-0.226px;">ODYSSEY_</span>
<span class="t" style="left:335px;top:416px;font-size:11px;line-height:12px;color:#000;letter-spacing:-0.914px;">PRODUCTION</span>
<span class="t" style="left:402.6px;top:416px;font-size:11px;line-height:12px;color:#000;letter-spacing:-0.065px;">/ TOU.</span>
<span class="t" style="left:434.5px;top:416px;font-size:11px;line-height:12px;color:#000;letter-spacing:-0.557px;">77520</span>
<div class="hdot" style="left:248px;top:438px;width:10px;height:1px;"></div>
<svg class="a" style="left:259px;top:432px" width="12" height="10" viewBox="0 0 12 10"><g fill="none" stroke="#383838"><path d="M8.5 2.5H1.5Q0.5 2.5 0.5 3.5V8.5Q0.5 9.5 1.5 9.5H10.5Q11.5 9.5 11.5 8.5V4"/><path d="M6.5 0.4L9.2 2.5L6.5 4.6" stroke-width="1.3"/></g></svg>
<span class="t" style="left:278px;top:432px;font-size:11px;line-height:12px;color:#000;letter-spacing:-0.226px;">ODYSSEY_</span>
<span class="t" style="left:335px;top:432px;font-size:11px;line-height:12px;color:#000;letter-spacing:-0.914px;">PRODUCTION</span>
<span class="t" style="left:402.6px;top:432px;font-size:11px;line-height:12px;color:#000;letter-spacing:-0.065px;">/ TOU.</span>
<span class="t" style="left:434.5px;top:432px;font-size:11px;line-height:12px;color:#000;letter-spacing:-0.557px;">77549</span>
<div class="hdot" style="left:248px;top:454px;width:10px;height:1px;"></div>
<svg class="a" style="left:259px;top:448px" width="12" height="10" viewBox="0 0 12 10"><g fill="none" stroke="#383838"><path d="M8.5 2.5H1.5Q0.5 2.5 0.5 3.5V8.5Q0.5 9.5 1.5 9.5H10.5Q11.5 9.5 11.5 8.5V4"/><path d="M6.5 0.4L9.2 2.5L6.5 4.6" stroke-width="1.3"/></g></svg>
<span class="t" style="left:278px;top:448px;font-size:11px;line-height:12px;color:#000;letter-spacing:-0.226px;">ODYSSEY_</span>
<span class="t" style="left:335px;top:448px;font-size:11px;line-height:12px;color:#000;letter-spacing:-0.914px;">PRODUCTION</span>
<span class="t" style="left:402.6px;top:448px;font-size:11px;line-height:12px;color:#000;letter-spacing:-0.065px;">/ TOU.</span>
<span class="t" style="left:434.5px;top:448px;font-size:11px;line-height:12px;color:#000;letter-spacing:-0.557px;">77618</span>
<div class="hdot" style="left:248px;top:470px;width:10px;height:1px;"></div>
<svg class="a" style="left:259px;top:464px" width="12" height="10" viewBox="0 0 12 10"><g fill="none" stroke="#383838"><path d="M8.5 2.5H1.5Q0.5 2.5 0.5 3.5V8.5Q0.5 9.5 1.5 9.5H10.5Q11.5 9.5 11.5 8.5V4"/><path d="M6.5 0.4L9.2 2.5L6.5 4.6" stroke-width="1.3"/></g></svg>
<span class="t" style="left:278px;top:464px;font-size:11px;line-height:12px;color:#000;letter-spacing:-0.226px;">ODYSSEY_</span>
<span class="t" style="left:335px;top:464px;font-size:11px;line-height:12px;color:#000;letter-spacing:-0.914px;">PRODUCTION</span>
<span class="t" style="left:402.6px;top:464px;font-size:11px;line-height:12px;color:#000;letter-spacing:-0.065px;">/ TOU.</span>
<span class="t" style="left:434.5px;top:464px;font-size:11px;line-height:12px;color:#000;letter-spacing:-0.557px;">77620</span>
<div class="dith" style="left:468px;top:78px;width:16px;height:409px;"></div>
<div class="sbtn" style="left:468px;top:78px;width:16px;height:16px;"><svg style="position:absolute;left:3px;top:5px" width="7" height="4" viewBox="0 0 7 4" shape-rendering="crispEdges"><path d="M0 4H7V3H6V2H5V1H4V0H3V1H2V2H1V3H0Z" fill="#000"/></svg></div>
<div class="sbtn" style="left:468px;top:101px;width:16px;height:57px;"></div>
<div class="sunk2" style="left:486px;top:76px;width:417px;height:296px;background:#fff;"></div>
<div style="left:518px;top:78px;width:1px;height:216px;background:#c0c0c0;"></div>
<span class="t" style="left:488px;top:78px;font-size:11px;line-height:12px;color:#404040;">D 1 :</span>
<span class="t" style="left:519px;top:78px;font-size:11px;line-height:12px;color:#404040;letter-spacing:-0.172px;">SANTA</span>
<span class="t" style="left:557px;top:78px;font-size:11px;line-height:12px;color:#404040;letter-spacing:-0.638px;">CRUZ</span>
<span class="t" style="left:488px;top:90px;font-size:11px;line-height:12px;color:#404040;">D 2 :</span>
<span class="t" style="left:519px;top:90px;font-size:11px;line-height:12px;color:#404040;letter-spacing:-0.172px;">SANTA</span>
<span class="t" style="left:557px;top:90px;font-size:11px;line-height:12px;color:#404040;letter-spacing:-0.638px;">CRUZ</span>
<span class="t" style="left:588px;top:90px;font-size:11px;line-height:12px;color:#404040;letter-spacing:0.337px;">-</span>
<span class="t" style="left:595px;top:90px;font-size:11px;line-height:12px;color:#404040;letter-spacing:-0.206px;">SAN</span>
<span class="t" style="left:620px;top:90px;font-size:11px;line-height:12px;color:#404040;letter-spacing:-0.283px;">JAVIER</span>
<span class="t" style="left:659px;top:90px;font-size:11px;line-height:12px;color:#404040;letter-spacing:0.337px;">-</span>
<span class="t" style="left:666px;top:90px;font-size:11px;line-height:12px;color:#404040;letter-spacing:-0.856px;">CONCEPCION</span>
<span class="t" style="left:488px;top:102px;font-size:11px;line-height:12px;color:#404040;">D 3 :</span>
<span class="t" style="left:519px;top:102px;font-size:11px;line-height:12px;color:#404040;letter-spacing:-0.856px;">CONCEPCION</span>
<span class="t" style="left:588px;top:102px;font-size:11px;line-height:12px;color:#404040;letter-spacing:0.337px;">-</span>
<span class="t" style="left:595px;top:102px;font-size:11px;line-height:12px;color:#404040;letter-spacing:-0.206px;">SAN</span>
<span class="t" style="left:620px;top:102px;font-size:11px;line-height:12px;color:#404040;letter-spacing:-0.283px;">JAVIER</span>
<span class="t" style="left:659px;top:102px;font-size:11px;line-height:12px;color:#404040;letter-spacing:0.337px;">-</span>
<span class="t" style="left:666px;top:102px;font-size:11px;line-height:12px;color:#404040;letter-spacing:-0.172px;">SANTA</span>
<span class="t" style="left:704px;top:102px;font-size:11px;line-height:12px;color:#404040;letter-spacing:-0.638px;">CRUZ</span>
<span class="t" style="left:488px;top:114px;font-size:11px;line-height:12px;color:#404040;">D 4 :</span>
<span class="t" style="left:519px;top:114px;font-size:11px;line-height:12px;color:#404040;letter-spacing:-0.172px;">SANTA</span>
<span class="t" style="left:557px;top:114px;font-size:11px;line-height:12px;color:#404040;letter-spacing:-0.638px;">CRUZ</span>
<span class="t" style="left:588px;top:114px;font-size:11px;line-height:12px;color:#404040;letter-spacing:0.337px;">-</span>
<span class="t" style="left:595px;top:114px;font-size:11px;line-height:12px;color:#404040;letter-spacing:-0.901px;">SUCRE</span>
<span class="t" style="left:488px;top:126px;font-size:11px;line-height:12px;color:#404040;">D 5 :</span>
<span class="t" style="left:519px;top:126px;font-size:11px;line-height:12px;color:#404040;letter-spacing:-0.901px;">SUCRE</span>
<span class="t" style="left:556px;top:126px;font-size:11px;line-height:12px;color:#404040;letter-spacing:0.337px;">-</span>
<span class="t" style="left:563px;top:126px;font-size:11px;line-height:12px;color:#404040;letter-spacing:-0.727px;">POTOSI</span>
<span class="t" style="left:488px;top:138px;font-size:11px;line-height:12px;color:#404040;">D 6 :</span>
<span class="t" style="left:519px;top:138px;font-size:11px;line-height:12px;color:#404040;letter-spacing:-0.727px;">POTOSI</span>
<span class="t" style="left:559px;top:138px;font-size:11px;line-height:12px;color:#404040;letter-spacing:0.337px;">-</span>
<span class="t" style="left:566px;top:138px;font-size:11px;line-height:12px;color:#404040;letter-spacing:-0.262px;">PULACAYO</span>
<span class="t" style="left:626px;top:138px;font-size:11px;line-height:12px;color:#404040;letter-spacing:0.337px;">-</span>
<span class="t" style="left:633px;top:138px;font-size:11px;line-height:12px;color:#404040;letter-spacing:-0.480px;">COLCHANI</span>
<span class="t" style="left:488px;top:150px;font-size:11px;line-height:12px;color:#404040;">D 7 :</span>
<span class="t" style="left:519px;top:150px;font-size:11px;line-height:12px;color:#404040;letter-spacing:-0.480px;">COLCHANI</span>
<span class="t" style="left:575px;top:150px;font-size:11px;line-height:12px;color:#404040;letter-spacing:0.337px;">-</span>
<span class="t" style="left:582px;top:150px;font-size:11px;line-height:12px;color:#404040;letter-spacing:-0.716px;">COQUESA</span>
<span class="t" style="left:635px;top:150px;font-size:11px;line-height:12px;color:#404040;letter-spacing:0.337px;">-</span>
<span class="t" style="left:642px;top:150px;font-size:11px;line-height:12px;color:#404040;letter-spacing:-0.544px;">INCAHUASI</span>
<span class="t" style="left:700px;top:150px;font-size:11px;line-height:12px;color:#404040;letter-spacing:-0.197px;">IS</span>
<span class="t" style="left:713px;top:150px;font-size:11px;line-height:12px;color:#404040;letter-spacing:0.337px;">-</span>
<span class="t" style="left:720px;top:150px;font-size:11px;line-height:12px;color:#404040;letter-spacing:-0.480px;">COLCHANI</span>
<span class="t" style="left:776px;top:150px;font-size:11px;line-height:12px;color:#404040;letter-spacing:0.337px;">-</span>
<span class="t" style="left:783px;top:150px;font-size:11px;line-height:12px;color:#404040;letter-spacing:-0.645px;">UYUNI</span>
<span class="t" style="left:488px;top:162px;font-size:11px;line-height:12px;color:#404040;">D 8 :</span>
<span class="t" style="left:519px;top:162px;font-size:11px;line-height:12px;color:#404040;letter-spacing:-0.645px;">UYUNI</span>
<span class="t" style="left:553px;top:162px;font-size:11px;line-height:12px;color:#404040;letter-spacing:0.337px;">-</span>
<span class="t" style="left:560px;top:162px;font-size:11px;line-height:12px;color:#404040;letter-spacing:0.273px;">LA</span>
<span class="t" style="left:577px;top:162px;font-size:11px;line-height:12px;color:#404040;letter-spacing:0.141px;">PAZ</span>
<span class="t" style="left:488px;top:174px;font-size:11px;line-height:12px;color:#404040;">D 9 :</span>
<span class="t" style="left:519px;top:174px;font-size:11px;line-height:12px;color:#404040;letter-spacing:0.273px;">LA</span>
<span class="t" style="left:536px;top:174px;font-size:11px;line-height:12px;color:#404040;letter-spacing:0.141px;">PAZ</span>
<span class="t" style="left:488px;top:186px;font-size:11px;line-height:12px;color:#404040;">D 10 :</span>
<span class="t" style="left:519px;top:186px;font-size:11px;line-height:12px;color:#404040;letter-spacing:0.273px;">LA</span>
<span class="t" style="left:536px;top:186px;font-size:11px;line-height:12px;color:#404040;letter-spacing:0.141px;">PAZ</span>
<span class="t" style="left:560px;top:186px;font-size:11px;line-height:12px;color:#404040;letter-spacing:0.337px;">-</span>
<span class="t" style="left:567px;top:186px;font-size:11px;line-height:12px;color:#404040;letter-spacing:-0.512px;">TIAHUANACO</span>
<span class="t" style="left:637px;top:186px;font-size:11px;line-height:12px;color:#404040;letter-spacing:0.337px;">-</span>
<span class="t" style="left:644px;top:186px;font-size:11px;line-height:12px;color:#404040;letter-spacing:-0.439px;">PARITI</span>
<span class="t" style="left:682px;top:186px;font-size:11px;line-height:12px;color:#404040;letter-spacing:-0.197px;">IS</span>
<span class="t" style="left:695px;top:186px;font-size:11px;line-height:12px;color:#404040;letter-spacing:0.337px;">-</span>
<span class="t" style="left:702px;top:186px;font-size:11px;line-height:12px;color:#404040;letter-spacing:-0.157px;">KALAHUTA</span>
<span class="t" style="left:764px;top:186px;font-size:11px;line-height:12px;color:#404040;letter-spacing:-0.197px;">IS</span>
<span class="t" style="left:777px;top:186px;font-size:11px;line-height:12px;color:#404040;letter-spacing:0.337px;">-</span>
<span class="t" style="left:784px;top:186px;font-size:11px;line-height:12px;color:#404040;letter-spacing:-1.073px;">PUERTO</span>
<span class="t" style="left:826px;top:186px;font-size:11px;line-height:12px;color:#404040;letter-spacing:-0.935px;">PEREZ</span>
<span class="t" style="left:488px;top:198px;font-size:11px;line-height:12px;color:#404040;">D 11 :</span>
<span class="t" style="left:519px;top:198px;font-size:11px;line-height:12px;color:#404040;letter-spacing:-1.073px;">PUERTO</span>
<span class="t" style="left:561px;top:198px;font-size:11px;line-height:12px;color:#404040;letter-spacing:-0.935px;">PEREZ</span>
<span class="t" style="left:596px;top:198px;font-size:11px;line-height:12px;color:#404040;letter-spacing:0.337px;">-</span>
<span class="t" style="left:603px;top:198px;font-size:11px;line-height:12px;color:#404040;letter-spacing:-0.160px;">COPACABANA</span>
<span class="t" style="left:680px;top:198px;font-size:11px;line-height:12px;color:#404040;letter-spacing:0.337px;">-</span>
<span class="t" style="left:687px;top:198px;font-size:11px;line-height:12px;color:#404040;letter-spacing:-0.742px;">SUN</span>
<span class="t" style="left:711px;top:198px;font-size:11px;line-height:12px;color:#404040;letter-spacing:-0.289px;">ISLAND</span>
<span class="t" style="left:752px;top:198px;font-size:11px;line-height:12px;color:#404040;letter-spacing:0.337px;">-</span>
<span class="t" style="left:759px;top:198px;font-size:11px;line-height:12px;color:#404040;letter-spacing:-0.160px;">COPACABANA</span>
<span class="t" style="left:836px;top:198px;font-size:11px;line-height:12px;color:#404040;letter-spacing:0.337px;">-</span>
<span class="t" style="left:843px;top:198px;font-size:11px;line-height:12px;color:#404040;letter-spacing:0.273px;">LA</span>
<span class="t" style="left:860px;top:198px;font-size:11px;line-height:12px;color:#404040;letter-spacing:0.141px;">PAZ</span>
<span class="t" style="left:488px;top:210px;font-size:11px;line-height:12px;color:#404040;">D 12 :</span>
<span class="t" style="left:519px;top:210px;font-size:11px;line-height:12px;color:#404040;letter-spacing:0.273px;">LA</span>
<span class="t" style="left:536px;top:210px;font-size:11px;line-height:12px;color:#404040;letter-spacing:0.141px;">PAZ</span>
<span class="t" style="left:560px;top:210px;font-size:11px;line-height:12px;color:#404040;letter-spacing:0.337px;">-</span>
<span class="t" style="left:567px;top:210px;font-size:11px;line-height:12px;color:#404040;letter-spacing:-0.224px;">COCHABAMBA</span>
<span class="t" style="left:646px;top:210px;font-size:11px;line-height:12px;color:#404040;letter-spacing:0.337px;">-</span>
<span class="t" style="left:653px;top:210px;font-size:11px;line-height:12px;color:#404040;letter-spacing:-0.894px;">TORO</span>
<span class="t" style="left:684px;top:210px;font-size:11px;line-height:12px;color:#404040;letter-spacing:-0.894px;">TORO</span>
<span class="t" style="left:488px;top:222px;font-size:11px;line-height:12px;color:#404040;">D 13 :</span>
<span class="t" style="left:519px;top:222px;font-size:11px;line-height:12px;color:#404040;letter-spacing:-0.894px;">TORO</span>
<span class="t" style="left:550px;top:222px;font-size:11px;line-height:12px;color:#404040;letter-spacing:-0.894px;">TORO</span>
<span class="t" style="left:581px;top:222px;font-size:11px;line-height:12px;color:#404040;letter-spacing:0.337px;">-</span>
<span class="t" style="left:588px;top:222px;font-size:11px;line-height:12px;color:#404040;letter-spacing:-0.224px;">COCHABAMBA</span>
<span class="t" style="left:488px;top:234px;font-size:11px;line-height:12px;color:#404040;">D 14 :</span>
<span class="t" style="left:519px;top:234px;font-size:11px;line-height:12px;color:#404040;letter-spacing:-0.224px;">COCHABAMBA</span>
<span class="t" style="left:598px;top:234px;font-size:11px;line-height:12px;color:#404040;letter-spacing:0.337px;">-</span>
<span class="t" style="left:605px;top:234px;font-size:11px;line-height:12px;color:#404040;letter-spacing:-0.901px;">SUCRE</span>
<span class="t" style="left:488px;top:246px;font-size:11px;line-height:12px;color:#404040;">D 15 :</span>
<span class="t" style="left:519px;top:246px;font-size:11px;line-height:12px;color:#404040;letter-spacing:-0.901px;">SUCRE</span>
<span class="t" style="left:556px;top:246px;font-size:11px;line-height:12px;color:#404040;letter-spacing:0.337px;">-</span>
<span class="t" style="left:563px;top:246px;font-size:11px;line-height:12px;color:#404040;letter-spacing:-0.413px;">TARABUCO</span>
<span class="t" style="left:623px;top:246px;font-size:11px;line-height:12px;color:#404040;letter-spacing:0.337px;">-</span>
<span class="t" style="left:630px;top:246px;font-size:11px;line-height:12px;color:#404040;letter-spacing:-0.421px;">ZUDANEZ</span>
<span class="t" style="left:682px;top:246px;font-size:11px;line-height:12px;color:#404040;letter-spacing:0.337px;">-</span>
<span class="t" style="left:689px;top:246px;font-size:11px;line-height:12px;color:#404040;letter-spacing:0.007px;">VILLA</span>
<span class="t" style="left:722px;top:246px;font-size:11px;line-height:12px;color:#404040;letter-spacing:-0.629px;">SERRANO</span>
<span class="t" style="left:488px;top:258px;font-size:11px;line-height:12px;color:#404040;">D 16 :</span>
<span class="t" style="left:519px;top:258px;font-size:11px;line-height:12px;color:#404040;letter-spacing:0.007px;">VILLA</span>
<span class="t" style="left:552px;top:258px;font-size:11px;line-height:12px;color:#404040;letter-spacing:-0.629px;">SERRANO</span>
<span class="t" style="left:605px;top:258px;font-size:11px;line-height:12px;color:#404040;letter-spacing:0.337px;">-</span>
<span class="t" style="left:612px;top:258px;font-size:11px;line-height:12px;color:#404040;letter-spacing:-0.288px;">THICAPAMPA</span>
<span class="t" style="left:682px;top:258px;font-size:11px;line-height:12px;color:#404040;letter-spacing:0.337px;">-</span>
<span class="t" style="left:689px;top:258px;font-size:11px;line-height:12px;color:#404040;letter-spacing:-0.588px;">HIGUERA</span>
<span class="t" style="left:738px;top:258px;font-size:11px;line-height:12px;color:#404040;letter-spacing:0.337px;">-</span>
<span class="t" style="left:745px;top:258px;font-size:11px;line-height:12px;color:#404040;letter-spacing:-0.086px;">VALLE</span>
<span class="t" style="left:781px;top:258px;font-size:11px;line-height:12px;color:#404040;letter-spacing:-0.677px;">GRANDE</span>
<span class="t" style="left:488px;top:270px;font-size:11px;line-height:12px;color:#404040;">D 17 :</span>
<span class="t" style="left:519px;top:270px;font-size:11px;line-height:12px;color:#404040;letter-spacing:-0.086px;">VALLE</span>
<span class="t" style="left:555px;top:270px;font-size:11px;line-height:12px;color:#404040;letter-spacing:-0.677px;">GRANDE</span>
<span class="t" style="left:601px;top:270px;font-size:11px;line-height:12px;color:#404040;letter-spacing:0.337px;">-</span>
<span class="t" style="left:608px;top:270px;font-size:11px;line-height:12px;color:#404040;letter-spacing:0.165px;">SAMAIPATA</span>
<span class="t" style="left:673px;top:270px;font-size:11px;line-height:12px;color:#404040;letter-spacing:0.337px;">-</span>
<span class="t" style="left:680px;top:270px;font-size:11px;line-height:12px;color:#404040;letter-spacing:-0.172px;">SANTA</span>
<span class="t" style="left:718px;top:270px;font-size:11px;line-height:12px;color:#404040;letter-spacing:-0.638px;">CRUZ</span>
<span class="t" style="left:488px;top:282px;font-size:11px;line-height:12px;color:#404040;">D 18 :</span>
<span class="t" style="left:519px;top:282px;font-size:11px;line-height:12px;color:#404040;letter-spacing:-0.172px;">SANTA</span>
<span class="t" style="left:557px;top:282px;font-size:11px;line-height:12px;color:#404040;letter-spacing:-0.638px;">CRUZ</span>
<span class="t" style="left:489px;top:374px;font-size:11px;line-height:12px;color:#000;letter-spacing:-0.193px;">Dep. dates :</span>
<span class="t" style="left:572px;top:374px;font-size:11px;line-height:12px;color:#000;letter-spacing:-0.126px;">Enter title / notes :</span>
<span class="t" style="left:805px;top:374px;font-size:11px;line-height:12px;color:#000;letter-spacing:-0.481px;">Themes :</span>
<div class="sunk2" style="left:486px;top:387px;width:84px;height:90px;background:#fff;"></div>
<div style="left:488px;top:389px;width:64px;height:17px;background:#006666;"></div>
<span class="t" style="left:489px;top:392px;font-size:11px;line-height:12px;color:#fff;letter-spacing:-0.105px;">10/10/2014</span>
<div class="dith" style="left:553px;top:389px;width:16px;height:88px;"></div>
<div class="sbtn" style="left:553px;top:389px;width:16px;height:16px;"><svg style="position:absolute;left:3px;top:5px" width="7" height="4" viewBox="0 0 7 4" shape-rendering="crispEdges"><path d="M0 4H7V3H6V2H5V1H4V0H3V1H2V2H1V3H0Z" fill="#000"/></svg></div>
<div class="sbtn" style="left:553px;top:405px;width:16px;height:16px;"></div>
<div class="sunk2" style="left:571px;top:387px;width:233px;height:21px;background:#fff;"></div>
<span class="t" style="left:574px;top:391px;font-size:11px;line-height:12px;color:#000;letter-spacing:-0.226px;">ODYSSEY_</span>
<span class="t" style="left:631px;top:391px;font-size:11px;line-height:12px;color:#000;letter-spacing:-0.914px;">PRODUCTION</span>
<span class="t" style="left:698.6px;top:391px;font-size:11px;line-height:12px;color:#000;letter-spacing:-0.065px;">/ TOU.</span>
<span class="t" style="left:730.5px;top:391px;font-size:11px;line-height:12px;color:#000;letter-spacing:-0.557px;">77308</span>
<div class="sunk2" style="left:571px;top:409px;width:233px;height:70px;background:#fff;"></div>
<div class="sunk2" style="left:805px;top:387px;width:97px;height:90px;background:#fff;"></div>
<div style="left:807px;top:389px;width:77px;height:17px;background:#006666;"></div>
<span class="t" style="left:808px;top:392px;font-size:11px;line-height:12px;color:#fff;letter-spacing:-0.200px;">Bolivia</span>
<div class="dith" style="left:885px;top:389px;width:16px;height:88px;"></div>
<div class="sbtn" style="left:885px;top:389px;width:16px;height:16px;"><svg style="position:absolute;left:3px;top:5px" width="7" height="4" viewBox="0 0 7 4" shape-rendering="crispEdges"><path d="M0 4H7V3H6V2H5V1H4V0H3V1H2V2H1V3H0Z" fill="#000"/></svg></div>
<div class="sbtn" style="left:885px;top:405px;width:16px;height:16px;"></div>
<div style="left:203px;top:465px;width:804px;height:255px;background:#d4d0c8;border:1px solid;border-color:#d4d0c8 #404040 #404040 #d4d0c8;box-sizing:border-box;"></div>
<div style="left:204px;top:466px;width:802px;height:253px;border:1px solid;border-color:#fff #808080 #808080 #fff;box-sizing:border-box;"></div>
<div style="left:207px;top:469px;width:796px;height:18px;background:#646464;"></div>
<div class="orb" style="left:209px;top:470px;width:16px;height:16px;"></div>
<span class="t" style="left:226px;top:472px;font-size:12px;line-height:13px;font-weight:bold;color:#fff;letter-spacing:-0.154px;-webkit-text-stroke:0.35px #fff;">Choose customer and file</span>
<div class="btn" style="left:951px;top:471px;width:16px;height:14px;"><i style="left:3px;top:8px;width:6px;height:2px;background:#000"></i></div>
<div class="btn" style="left:967px;top:471px;width:16px;height:14px;"><i style="left:2px;top:1px;width:9px;height:9px;border:1px solid #000;border-top:2px solid #000;box-sizing:border-box"></i></div>
<div class="btn" style="left:985px;top:471px;width:16px;height:14px;"><svg style="position:absolute;left:3px;top:2px" width="8" height="7" viewBox="0 0 8 7"><path d="M0.5 0L7.5 7M7.5 0L0.5 7" stroke="#000" stroke-width="1.45" fill="none"/></svg></div>
<div class="sunk2" style="left:214px;top:492px;width:322px;height:22px;"></div>
<div class="sunk2" style="left:214px;top:514px;width:322px;height:200px;background:#fff;"></div>
<div style="left:216px;top:516px;width:300px;height:18px;background:#d4d0c8;"></div>
<div style="left:216px;top:534px;width:300px;height:1px;background:#000;"></div>
<span class="t" style="left:218px;top:519px;font-size:11px;line-height:12px;font-weight:bold;color:#000;letter-spacing:0.457px;">Customer</span>
<span class="t" style="left:367px;top:519px;font-size:11px;line-height:12px;color:#000;letter-spacing:-0.130px;">Contact</span>
<div style="left:216px;top:535px;width:300px;height:18px;background:#006666;"></div>
<span class="t" style="left:218px;top:538px;font-size:11px;line-height:12px;color:#fff;letter-spacing:-0.255px;">Alpha Print</span>
<span class="t" style="left:218px;top:557px;font-size:11px;line-height:12px;color:#000;letter-spacing:-0.271px;">S.N.T.R</span>
<span class="t" style="left:367px;top:557px;font-size:11px;line-height:12px;color:#000;letter-spacing:-0.309px;">Releau</span>
<div style="left:216px;top:572px;width:300px;height:1px;background:#c0c0c0;"></div>
<div class="dith" style="left:518px;top:516px;width:16px;height:200px;"></div>
<div class="sbtn" style="left:518px;top:516px;width:16px;height:16px;"><svg style="position:absolute;left:3px;top:5px" width="7" height="4" viewBox="0 0 7 4" shape-rendering="crispEdges"><path d="M0 4H7V3H6V2H5V1H4V0H3V1H2V2H1V3H0Z" fill="#000"/></svg></div>
<div class="sbtn" style="left:518px;top:532px;width:16px;height:200px;"></div>
<div class="sunk2" style="left:544px;top:514px;width:395px;height:200px;background:#fff;"></div>
<div style="left:546px;top:516px;width:372px;height:18px;background:#d4d0c8;"></div>
<div style="left:546px;top:534px;width:372px;height:1px;background:#000;"></div>
<span class="t" style="left:547px;top:519px;font-size:11px;line-height:12px;color:#000;letter-spacing:-0.370px;">File number</span>
<span class="t" style="left:637px;top:519px;font-size:11px;line-height:12px;color:#000;letter-spacing:-0.153px;">Traveller</span>
<span class="t" style="left:759px;top:519px;font-size:11px;line-height:12px;color:#000;letter-spacing:-0.162px;">Created</span>
<span class="t" style="left:839px;top:519px;font-size:11px;line-height:12px;color:#000;letter-spacing:-0.101px;">Departure</span>
<div style="left:546px;top:535px;width:372px;height:18px;background:#006666;"></div>
<span class="t" style="left:548px;top:538px;font-size:11px;line-height:12px;color:#fff;letter-spacing:-0.705px;">AP001</span>
<span class="t" style="left:637px;top:538px;font-size:11px;line-height:12px;color:#fff;letter-spacing:-0.293px;">Blondeau Claude</span>
<span class="t" style="left:759px;top:538px;font-size:11px;line-height:12px;color:#fff;letter-spacing:-0.105px;">10/10/2014</span>
<span class="t" style="left:839px;top:538px;font-size:11px;line-height:12px;color:#fff;letter-spacing:-0.105px;">10/10/2014</span>
<div class="dith" style="left:921px;top:516px;width:16px;height:200px;"></div>
<div class="sbtn" style="left:921px;top:516px;width:16px;height:16px;"><svg style="position:absolute;left:3px;top:5px" width="7" height="4" viewBox="0 0 7 4" shape-rendering="crispEdges"><path d="M0 4H7V3H6V2H5V1H4V0H3V1H2V2H1V3H0Z" fill="#000"/></svg></div>
<div class="sbtn" style="left:921px;top:532px;width:16px;height:16px;"></div>
<div style="left:945px;top:514px;width:54px;height:200px;border:1px solid;border-color:#fff #404040 #404040 #fff;box-shadow:inset -1px -1px 0 #808080;"></div>
<svg class="a" style="left:964px;top:619px" width="15" height="13" viewBox="0 0 15 13"><path d="M1.3 6.2L3.6 6.4L6.6 9.6C8.6 5.9 11 3 14.6 0.9C12.4 4.2 9.8 8 7.2 12.7Z" fill="#1010e0"/><path d="M0.5 5.8L3 6.2L6 9.6C8 5.6 10.4 2.8 14 0.5C11.6 3.8 9 7.6 6.4 12.2Z" fill="#108010"/><path d="M6.6 8C8.4 5 10.6 2.6 13.4 0.9" fill="none" stroke="#f0f000" stroke-width="1.3"/></svg>
<span class="t" style="left:964px;top:639px;font-size:11px;line-height:12px;color:#000;letter-spacing:-0.447px;">OK</span>
</body></html>
